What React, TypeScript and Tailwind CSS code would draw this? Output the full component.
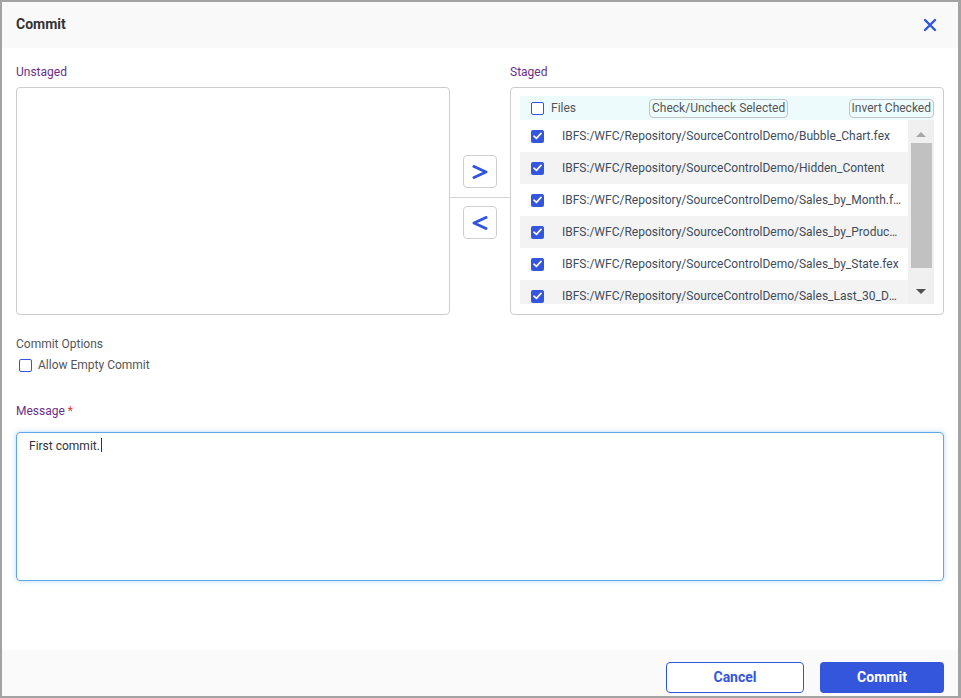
import type { ReactNode } from "react";

const FILES = [
  "IBFS:/WFC/Repository/SourceControlDemo/Bubble_Chart.fex",
  "IBFS:/WFC/Repository/SourceControlDemo/Hidden_Content",
  "IBFS:/WFC/Repository/SourceControlDemo/Sales_by_Month.fex",
  "IBFS:/WFC/Repository/SourceControlDemo/Sales_by_Product.fex",
  "IBFS:/WFC/Repository/SourceControlDemo/Sales_by_State.fex",
  "IBFS:/WFC/Repository/SourceControlDemo/Sales_Last_30_Days.fex",
];

function CheckBox({ checked }: { checked: boolean }) {
  if (checked) {
    return (
      <span className="flex h-[13px] w-[13px] shrink-0 items-center justify-center rounded-[2px] bg-[#3456dc]">
        <svg width="9" height="8" viewBox="0 0 9 8" fill="none">
          <path d="M1 4.2 L3.4 6.4 L8 1.4" stroke="white" strokeWidth="1.6" strokeLinecap="round" strokeLinejoin="round" />
        </svg>
      </span>
    );
  }
  return <span className="block h-[13px] w-[13px] shrink-0 rounded-[2px] border-[1.5px] border-[#3456dc] bg-white" />;
}

function ArrowButton({ dir }: { dir: "right" | "left" }) {
  return (
    <button className="flex h-[33px] w-[34px] items-center justify-center rounded-[4px] border border-[#cfcfcf] bg-white">
      <svg width="16" height="14" viewBox="0 0 16 14" fill="none">
        <path
          d={dir === "right" ? "M2 1.5 L14 7 L2 12.5" : "M14 1.5 L2 7 L14 12.5"}
          stroke="#2f55e0"
          strokeWidth="3"
          strokeLinecap="round"
          strokeLinejoin="round"
        />
      </svg>
    </button>
  );
}

function FieldLabel({ children }: { children: ReactNode }) {
  return <div className="text-[12px] leading-[16px] text-[#6b2f86]">{children}</div>;
}

export default function App() {
  return (
    <div
      className="flex h-[698px] w-[961px] flex-col border-t-2 border-b-2 border-l-2 border-r-[3px] border-[#a3a3a3] bg-white text-[#333]"
      style={{ fontFamily: "Roboto, 'Liberation Sans', sans-serif" }}
    >
      {/* header */}
      <div className="flex h-[46px] shrink-0 items-center justify-between bg-[#f9f9f9] pb-px pl-[14px] pr-[21px]">
        <span className="text-[14px] font-bold text-[#333]">Commit</span>
        <svg width="14" height="14" viewBox="0 0 14 14" fill="none">
          <path d="M2 2 L12 12 M12 2 L2 12" stroke="#2f55e0" strokeWidth="2.4" strokeLinecap="round" />
        </svg>
      </div>

      {/* body */}
      <div className="flex flex-1 flex-col px-[14px] pt-[16px]">
        <div className="flex">
          <div className="w-[434px]">
            <FieldLabel>Unstaged</FieldLabel>
            <div className="mt-[7px] h-[228px] rounded-[4px] border border-[#cccccc]" />
          </div>

          <div className="flex w-[60px] flex-col items-center pt-[91px]">
            <ArrowButton dir="right" />
            <div className="mt-[9px] h-px w-full bg-[#d4d4d4]" />
            <div className="mt-[8px]">
              <ArrowButton dir="left" />
            </div>
          </div>

          <div className="w-[434px]">
            <FieldLabel>Staged</FieldLabel>
            <div className="mt-[7px] flex h-[228px] flex-col rounded-[4px] border border-[#cccccc] pt-[8px] pr-[9px] pb-[10px] pl-[9px]">
              <div className="flex h-[24px] shrink-0 items-center bg-[#eefbfc] pl-[11px] text-[12px] text-[#555]">
                <CheckBox checked={false} />
                <span className="ml-[7px]">Files</span>
                <span className="ml-[73px] rounded-[4px] border border-[#c4c4c4] px-[2px] leading-[17px]">
                  Check/Uncheck Selected
                </span>
                <span className="ml-auto rounded-[4px] border border-[#c4c4c4] px-[2px] leading-[17px]">
                  Invert Checked
                </span>
              </div>
              <div className="flex min-h-0 flex-1">
                <div className="min-w-0 flex-1 overflow-hidden">
                  {FILES.map((file, i) => (
                    <div
                      key={file}
                      className={`flex h-[32px] items-center pl-[11px] pr-[7px] text-[12px] text-[#3e4d5c] ${
                        i % 2 === 1 ? "bg-[#f3f3f3]" : "bg-white"
                      }`}
                    >
                      <CheckBox checked />
                      <span className="ml-[18px] truncate">{file}</span>
                    </div>
                  ))}
                </div>
                <div className="flex w-[26px] shrink-0 flex-col items-center bg-[#f0f0f0] pt-[11px] pb-[9px]">
                  <svg width="12" height="7" viewBox="0 0 12 7">
                    <path d="M1 6 L6 1 L11 6 Z" fill="#a8a8a8" />
                  </svg>
                  <div className="mt-[5px] h-[125px] w-[21px] bg-[#c1c1c1]" />
                  <div className="flex-1" />
                  <svg width="12" height="7" viewBox="0 0 12 7">
                    <path d="M1 1 L6 6 L11 1 Z" fill="#505050" />
                  </svg>
                </div>
              </div>
            </div>
          </div>
        </div>

        <div className="mt-[21px] text-[12px] leading-[16px] text-[#555]">Commit Options</div>
        <div className="mt-[5px] flex h-[16px] items-center pl-[3px] text-[12px] text-[#555]">
          <CheckBox checked={false} />
          <span className="ml-[6px]">Allow Empty Commit</span>
        </div>

        <div className="mt-[30px]">
          <FieldLabel>
            Message <span className="text-[#e03a3a]">*</span>
          </FieldLabel>
        </div>
        <div className="mt-[13px] h-[149px] rounded-[4px] border border-[#5ea6e6] px-[12px] pt-[3px] text-[12px] leading-[16px] text-[#333] shadow-[0_0_5px_rgba(94,166,230,0.45)]">
          First commit.<span className="ml-px inline-block h-[14px] w-px translate-y-[2px] bg-[#333]" />
        </div>
      </div>

      {/* footer */}
      <div className="flex h-[46px] shrink-0 items-start justify-end gap-[16px] bg-[#fafafa] pt-[12px] pr-[14px]">
        <button className="h-[31px] w-[138px] rounded-[4px] border border-[#3456dc] bg-white text-[14px] font-bold text-[#3456dc]">
          Cancel
        </button>
        <button className="h-[31px] w-[124px] rounded-[4px] bg-[#3456dc] text-[14px] font-bold text-white">
          Commit
        </button>
      </div>
    </div>
  );
}
